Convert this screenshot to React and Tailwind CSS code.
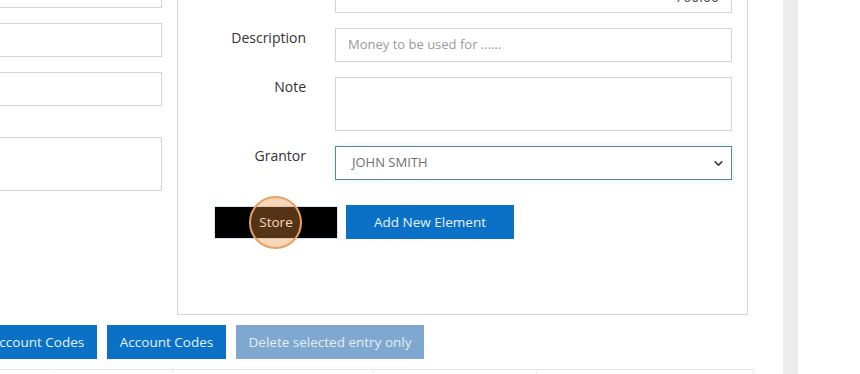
import { ChevronDown } from 'lucide-react';

const leftInputs = [
  { h: 'h-[34px]', mt: '' },
  { h: 'h-[34px]', mt: 'mt-[15px]' },
  { h: 'h-[34px]', mt: 'mt-[15px]' },
  { h: 'h-[54px]', mt: 'mt-[31px]' },
];

const FormRow = ({ label, children, className = '' }) => (
  <div className={`flex items-start ${className}`}>
    <label className="w-[128px] text-right text-[14px] leading-5 text-[#333]">{label}</label>
    <div className="ml-[29px] w-[397px]">{children}</div>
  </div>
);

export default function App() {
  return (
    <div className="relative flex h-[374px] w-[860px] overflow-hidden bg-white font-['Open_Sans',sans-serif]">
      <div className="w-[783px] shrink-0">
        <div className="-mt-[39px] flex items-start">
          {/* left form column, partly off screen */}
          <div className="-ml-[40px] mt-[13px] w-[202px] shrink-0">
            {leftInputs.map((f, i) => (
              <div key={i} className={`${f.h} ${f.mt} border border-[#d4d4d4] bg-white`} />
            ))}
          </div>

          {/* grant panel */}
          <div className="ml-[15px] w-[571px] shrink-0 border border-[#d6d6d6] pt-[17px] pb-[75px]">
            <FormRow label="">
              <div className="flex h-[34px] items-center justify-end border border-[#d4d4d4] px-3 text-[14px] text-[#555]">760.00</div>
            </FormRow>
            <FormRow label="Description" className="mt-[15px]">
              <div className="flex h-[34px] items-center border border-[#d4d4d4] px-3 text-[13px] text-[#9a9a9a]">Money to be used for ......</div>
            </FormRow>
            <FormRow label="Note" className="mt-[15px]">
              <div className="h-[54px] border border-[#d4d4d4]" />
            </FormRow>
            <FormRow label="Grantor" className="mt-[15px]">
              <div className="flex h-[34px] items-center justify-between border border-[#5e8a8f] pl-4 pr-[6px] text-[13px] text-[#707070] shadow-[0_0_4px_rgba(120,200,220,0.35)]">
                <span>JOHN SMITH</span>
                <ChevronDown size={13} strokeWidth={3.2} className="text-[#444]" />
              </div>
            </FormRow>
            <div className="ml-[36px] mt-[25px] flex items-center gap-[8px]">
              <div className="relative">
                <button className="flex h-[33px] w-[124px] items-center justify-center border border-[#d6e6f0] bg-black text-[13.5px] text-white">Store</button>
                <div className="pointer-events-none absolute left-[35px] top-[-10px] h-[53px] w-[53px] rounded-full border-2 border-[#e9a064] bg-[rgba(236,140,62,0.36)]" />
              </div>
              <button className="flex h-[34px] w-[168px] items-center justify-center bg-[#0a71c7] text-[13.5px] text-[#e6f2fb]">Add New Element</button>
            </div>
          </div>
        </div>

        {/* action buttons */}
        <div className="-ml-[22px] mt-[10px] flex gap-[10px]">
          <button className="flex h-[34px] w-[119px] items-center justify-center bg-[#0a71c7] text-[13.5px] text-[#e6f2fb]">Account Codes</button>
          <button className="flex h-[34px] w-[119px] items-center justify-center bg-[#0a71c7] text-[13.5px] text-[#e6f2fb]">Account Codes</button>
          <button className="flex h-[34px] w-[188px] items-center justify-center bg-[#7ea8cf] text-[13.5px] text-[#e4edf5]">Delete selected entry only</button>
        </div>

        {/* table header edge */}
        <div className="mt-[10px] flex h-[10px] w-[754px] border-t border-[#e6e6e6]">
          <div className="w-[55px] border-r border-[#ececec]" />
          <div className="w-[118px] border-r border-[#ececec]" />
          <div className="w-[201px] border-r border-[#ececec]" />
          <div className="w-[163px] border-r border-[#ececec]" />
          <div className="flex-1 border-r border-[#ececec]" />
        </div>
      </div>
      <div className="w-[15px] shrink-0 bg-[#ececec]" />
    </div>
  );
}
